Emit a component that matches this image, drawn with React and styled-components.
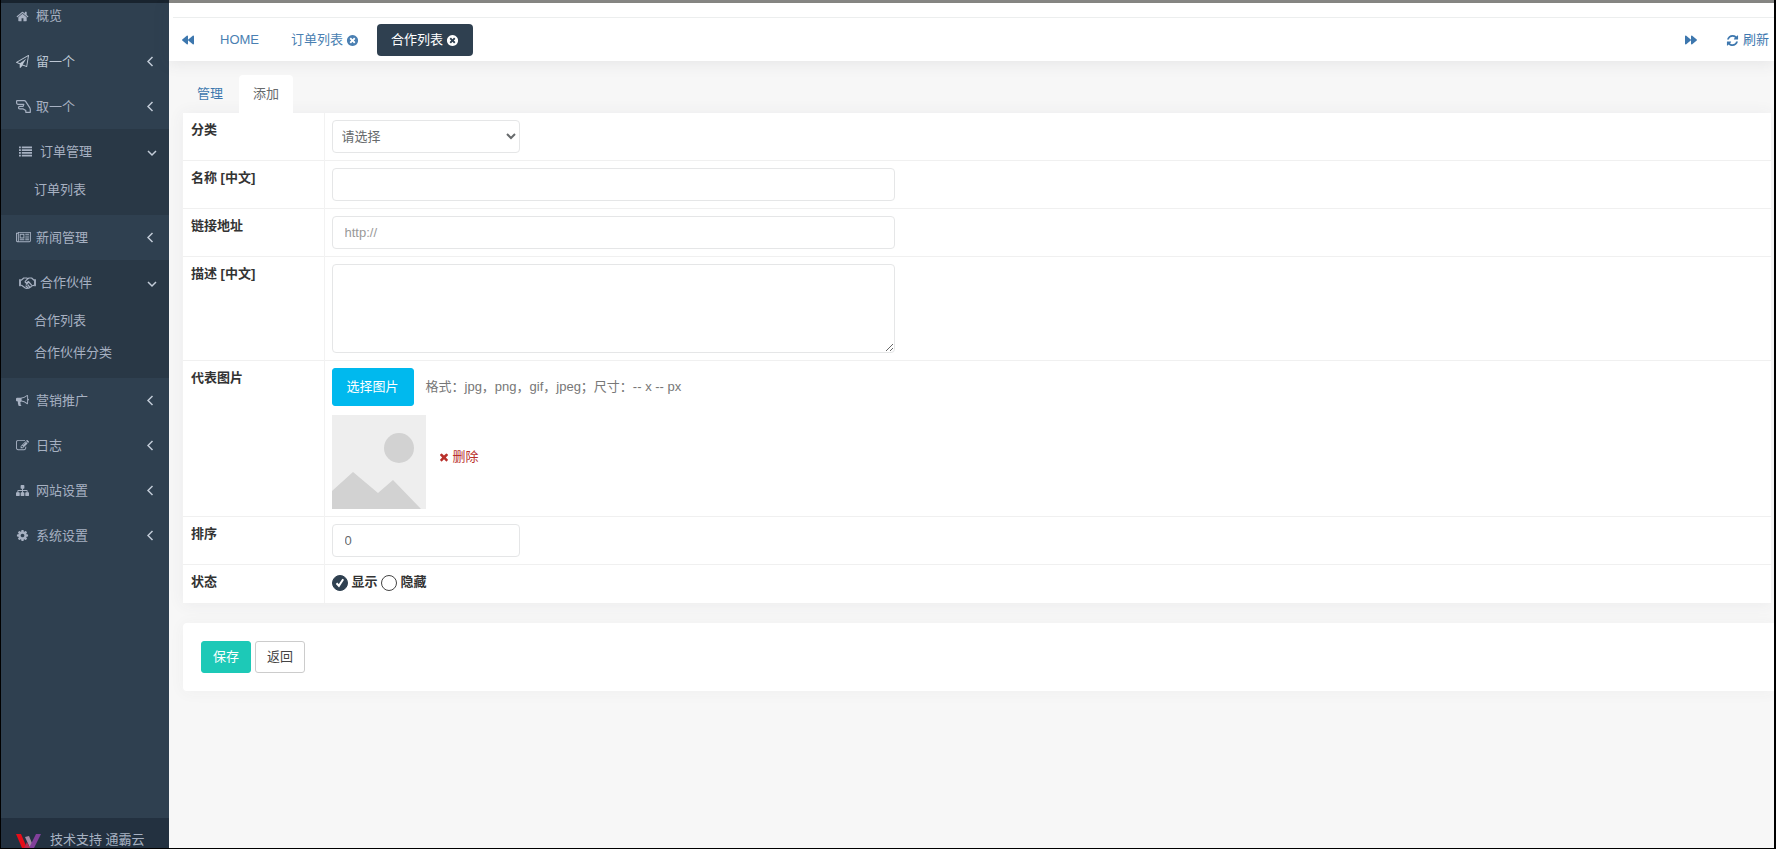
import React, { useState } from "react";
import styled, { createGlobalStyle, css } from "styled-components";
import { FaBackward, FaForward } from "react-icons/fa";

const fonts = `"Liberation Sans", "Noto Sans CJK SC", sans-serif`;

const Global = createGlobalStyle`
  *, *::before, *::after { box-sizing: border-box; }
  body { margin: 0; background: #f7f7f7; color: #676a6c; font: 13px/20px ${fonts}; }
  button, input, select, textarea { font: inherit; color: inherit; }
  a { color: #3d77ae; text-decoration: none; }
`;

const paths = {
  home: "M1472 992v480q0 26-19 45t-45 19h-384v-384h-256v384h-384q-26 0-45-19t-19-45v-480q0-1 .5-3t.5-3l575-474 575 474q1 2 1 6zm223-69l-62 74q-8 9-21 11h-3q-13 0-21-7l-692-577-692 577q-12 8-24 7-13-2-21-11l-62-74q-8-10-7-23.5t11-21.5l719-599q32-26 76-26t76 26l244 204v-195q0-14 9-23t23-9h192q14 0 23 9t9 23v408l219 182q10 8 11 21.5t-7 23.5z",
  plane: "M1764 11q33 24 27 64l-256 1536q-5 29-32 45-14 8-31 8-11 0-24-5l-527-215-298 327q-18 21-47 21-14 0-23-4-19-7-30-23.5t-11-36.5v-452l-472-193q-37-14-40-55-3-39 32-59l1664-960q35-21 68 2zm-342 1499l221-1323-1434 827 336 137 863-639-478 797z",
  list: "M0 192h256v256h-256zM384 192h1408v256h-1408zM0 576h256v256h-256zM384 576h1408v256h-1408zM0 960h256v256h-256zM384 960h1408v256h-1408zM0 1344h256v256h-256zM384 1344h1408v256h-1408z",
  news: "M1024 512h-384v384h384v-384zm128 640v128h-640v-128h640zm0-768v640h-640v-640h640zm640 768v128h-512v-128h512zm0-256v128h-512v-128h512zm0-256v128h-512v-128h512zm0-256v128h-512v-128h512zm-1536 960v-960h-128v960q0 26 19 45t45 19 45-19 19-45zm1664 0v-1088h-1536v1088q0 33-11 64h1483q26 0 45-19t19-45zm128-1216v1216q0 80-56 136t-136 56h-1664q-80 0-136-56t-56-136v-1088h256v-128h1792z",
  horn: "M1664 640q53 0 90.5 37.5t37.5 90.5-37.5 90.5-90.5 37.5v384q0 52-38 90t-90 38q-417-347-812-380-58 19-91 66t-31 100.5 40 92.5q-20 33-23 65.5t6 58 33.5 55 48 50 61.5 50.5q-29 58-111.5 83t-168.5 11.5-132-55.5q-7-23-29.5-87.5t-32-94.5-23-89-15-101 3.5-98.5 22-110.5h-122q-66 0-113-47t-47-113v-192q0-66 47-113t113-47h480q435 0 896-384 52 0 90 38t38 90v384zm-128 604v-954q-394 302-768 343v270q377 42 768 341z",
  edit: "M888 1184l116-116-152-152-116 116v56h96v96h56zm440-720q-16-16-33 1l-350 350q-17 17-1 33t33-1l350-350q17-17 1-33zm80 594v190q0 119-84.5 203.5t-203.5 84.5h-832q-119 0-203.5-84.5t-84.5-203.5v-832q0-119 84.5-203.5t203.5-84.5h832q63 0 117 25 15 7 18 23 3 17-9 29l-49 49q-14 14-32 8-23-6-45-6h-832q-66 0-113 47t-47 113v832q0 66 47 113t113 47h832q66 0 113-47t47-113v-126q0-13 9-22l64-64q15-15 35-7t20 29zm-96-738l288 288-672 672h-288v-288zm444 132l-92 92-288-288 92-92q28-28 68-28t68 28l152 152q28 28 28 68t-28 68z",
  sitemap: "M1792 1248v320q0 40-28 68t-68 28h-320q-40 0-68-28t-28-68v-320q0-40 28-68t68-28h96v-192h-512v192h96q40 0 68 28t28 68v320q0 40-28 68t-68 28h-320q-40 0-68-28t-28-68v-320q0-40 28-68t68-28h96v-192h-512v192h96q40 0 68 28t28 68v320q0 40-28 68t-68 28h-320q-40 0-68-28t-28-68v-320q0-40 28-68t68-28h96v-192q0-52 38-90t90-38h512v-192h-96q-40 0-68-28t-28-68v-320q0-40 28-68t68-28h320q40 0 68 28t28 68v320q0 40-28 68t-68 28h-96v192h512q52 0 90 38t38 90v192h96q40 0 68 28t28 68z",
  cog: "M1152 896q0-106-75-181t-181-75-181 75-75 181 75 181 181 75 181-75 75-181zm512-109v222q0 12-8 23t-20 13l-185 28q-19 54-39 91 35 50 107 138 10 12 10 25t-9 23q-27 37-99 108t-94 71q-12 0-26-9l-138-108q-44 23-91 38-16 136-29 186-7 28-36 28h-222q-14 0-24.5-8.5t-11.5-21.5l-28-184q-49-16-90-37l-141 107q-10 9-25 9-14 0-25-11-126-114-165-168-7-10-7-23 0-12 8-23 15-21 51-66.5t54-70.5q-27-50-41-99l-183-27q-13-2-21-12.5t-8-23.5v-222q0-12 8-23t19-13l186-28q14-46 39-92-40-57-107-138-10-12-10-24 0-10 9-23 26-36 98.5-107.5t94.5-71.5q13 0 26 10l138 107q44-23 91-38 16-136 29-186 7-28 36-28h222q14 0 24.5 8.5t11.5 21.5l28 184q49 16 90 37l142-107q9-9 24-9 13 0 25 10 129 119 165 170 7 8 7 22 0 12-8 23-15 21-51 66.5t-54 70.5q26 50 41 98l183 28q13 2 21 12.5t8 23.5z",
  closeCircle: "M1277 1122q0-26-19-45l-181-181 181-181q19-19 19-45 0-27-19-46l-90-90q-19-19-46-19-26 0-45 19l-181 181-181-181q-19-19-45-19-27 0-46 19l-90 90q-19 19-19 46 0 26 19 45l181 181-181 181q-19 19-19 45 0 27 19 46l90 90q19 19 46 19 26 0 45-19l181-181 181 181q19 19 45 19 27 0 46-19l90-90q19-19 19-46zm387-226q0 209-103 385.5t-279.5 279.5-385.5 103-385.5-103-279.5-279.5-103-385.5 103-385.5 279.5-279.5 385.5-103 385.5 103 279.5 279.5 103 385.5z",
  refresh: "M1639 1056q0 5-1 7-64 268-268 434.5t-478 166.5q-146 0-282.5-55t-243.5-157l-129 129q-19 19-45 19t-45-19-19-45v-448q0-26 19-45t45-19h448q26 0 45 19t19 45-19 45l-137 137q71 66 161 102t187 36q134 0 250-65t186-179q11-17 53-117 8-23 30-23h192q13 0 22.5 9.5t9.5 22.5zm25-800v448q0 26-19 45t-45 19h-448q-26 0-45-19t-19-45 19-45l138-138q-148-137-349-137-134 0-250 65t-186 179q-11 17-53 117-8 23-30 23h-199q-13 0-22.5-9.5t-9.5-22.5v-7q65-268 270-434.5t480-166.5q146 0 284 55.5t245 156.5l130-129q19-19 45-19t45 19 19 45z",
  times: "M1490 1322q0 40-28 68l-136 136q-28 28-68 28t-68-28l-294-294-294 294q-28 28-68 28t-68-28l-136-136q-28-28-28-68t28-68l294-294-294-294q-28-28-28-68t28-68l136-136q28-28 68-28t68 28l294 294 294-294q28-28 68-28t68 28l136 136q28 28 28 68t-28 68l-294 294 294 294q28 28 28 68z",
};

const Glyph = ({ name, size = 13, box = "0 0 1792 1792" }) => (
  <svg height={size} viewBox={box} fill="currentColor" aria-hidden="true"><path d={paths[name]} /></svg>
);

const HandIcon = () => (
  <svg width="15" height="13" viewBox="0 0 15 13" fill="none" stroke="currentColor" strokeWidth="1.2" strokeLinejoin="round" aria-hidden="true">
    <path d="M1.1.7h7.1q1 0 1.6.9l3.9 6q.6 1 .6 2v2.7H9.8v-1.7L7.2 8.9H3.7q-1.2 0-1.2-1.1 0-1.4 1.4-1.4h3.2l.7-2H2.2Q.6 4.400.6 2.600V1.200q0-.5.5-.5z" />
  </svg>
);

const HandshakeIcon = () => (
  <svg width="17" height="12" viewBox="0 0 17 12" fill="none" stroke="currentColor" strokeWidth="1.2" strokeLinejoin="round" strokeLinecap="round" aria-hidden="true">
    <path d="M1 3v5.400M16 3v5.400" strokeWidth="1.800" />
    <path d="M2.500 3l2.300-2h3l1 .7 1.200-.7h2.600L14.800 3M2.500 8.300l3.800 2.700q1 .6 2 .2 1.600.2 2.400-.9 1.300.1 1.700-1.300l2.400-.7" />
    <path d="M8.800 1.700L6.200 4.300q-.2 1.700 1.400 1.500L9.400 4.500l3 3.300M9.800 5l-2.500 2.200M7 9l1.600 1.500M9 8l1.500 1.800" />
  </svg>
);

const Shell = styled.div`
  display: flex;
  min-height: 100vh;
  border: solid #000;
  border-width: 0 2px 1px 1px;
`;

const Sidebar = styled.aside`
  flex: 0 0 168px;
  display: flex;
  flex-direction: column;
  background: #2f4050;
  color: #a7b1c2;
  border-top: 3px solid #18232e;
`;

const Menu = styled.nav`flex: 1;`;

const Group = styled.div`
  background: ${(p) => (p.$open ? "#293846" : "transparent")};
  padding-bottom: ${(p) => (p.$open ? "9px" : 0)};
`;

const MenuItem = styled.a`
  display: flex;
  align-items: center;
  height: ${(p) => (p.$clipped ? "36px" : "45px")};
  padding: 0 15px;
  padding-bottom: ${(p) => (p.$clipped ? "10px" : 0)};
  gap: 7px;
  color: ${(p) => (p.$bright ? "#bcc6d3" : "#a7b1c2")};
  ${(p) => p.$open && css`padding: 0 12px 0 18px; gap: 8px;`}
`;

const IconSlot = styled.span`
  display: flex;
  width: ${(p) => (p.$wide ? "15px" : "13px")};
  margin-right: ${(p) => (p.$wide ? "-2px" : 0)};
  svg { flex: none; }
`;

const Chevron = styled.svg`
  margin-left: auto;
  fill: none;
  stroke: #c3ccd8;
  stroke-width: 1.5;
`;

const SubItem = styled.a`
  display: block;
  padding-left: 33px;
  line-height: 32px;
  color: #a7b1c2;
`;

const Support = styled.footer`
  display: flex;
  gap: 9px;
  height: 30px;
  padding: 12px 0 0 15px;
  background: #233140;
  overflow: hidden;
  white-space: nowrap;
  svg { flex: none; margin-top: 4px; }
`;

const Main = styled.main`
  flex: 1;
  min-width: 0;
  border-top: 3px solid #888885;
`;

const TopStrip = styled.div`
  height: 15px;
  margin-left: 4px;
  border-bottom: 1px solid #eceeee;
`;

const Header = styled.header`
  background: #fff;
  box-shadow: 0 1px 15px 1px rgba(69, 65, 78, 0.1);
`;

const TabBar = styled.nav`
  display: flex;
  align-items: center;
  padding: 6px 5px 5px 13px;
  gap: 4px;
`;

const IconButton = styled.button`
  display: flex;
  align-items: center;
  padding: 0;
  gap: 4px;
  border: 0;
  background: none;
  color: #3d77ae;
  cursor: pointer;
`;

const RemoveButton = styled(IconButton)`
  gap: 3px;
  padding-bottom: 10px;
  color: #b9302b;
`;

const PageTab = styled.a`
  display: flex;
  align-items: center;
  gap: 3px;
  height: 32px;
  padding: 0 14px;
  border-radius: 4px;
  color: ${(p) => (p.$active ? "#fff" : "#4a7fb2")};
  background: ${(p) => (p.$active ? "#2f4050" : "transparent")};
`;

const TabList = styled.div`
  display: flex;
  flex: 1;
  gap: 4px;
  padding-left: 8px;
`;

const BarTools = styled.div`
  display: flex;
  gap: 29px;
`;

const Content = styled.div`
  padding: 14px 0 0 14px;
`;

const SubTabs = styled.div`
  display: flex;
  gap: 2px;
`;

const SubTab = styled.a`
  height: 38px;
  padding: 0 14px;
  line-height: 38px;
  border-radius: 4px 4px 0 0;
  background: ${(p) => (p.$active ? "#fff" : "transparent")};
  color: ${(p) => (p.$active ? "#676a6c" : "#3d77ae")};
`;

const FormTable = styled.table`
  width: calc(100% - 3px);
  border-collapse: collapse;
  table-layout: fixed;
  background: #fff;
  box-shadow: 0 1px 15px 1px rgba(69, 65, 78, 0.06);
  tr + tr > * { border-top: 1px solid #f0f0f0; }
  col:first-child { width: 141px; }
`;

const HeadCell = styled.th`
  padding: 7px 8px;
  border-right: 1px solid #f2f2f2;
  text-align: left;
  vertical-align: top;
  font-weight: 600;
  color: #333;
`;

const Cell = styled.td`
  padding: 7px;
  vertical-align: top;
`;

const control = css`
  display: block;
  height: 33px;
  width: ${(p) => (p.$short ? "188px" : "563px")};
  max-width: 100%;
  border: 1px solid #e5e6e7;
  border-radius: 4px;
  background: #fff;
  color: #676a6c;
`;

const TextInput = styled.input`
  ${control}
  padding: 6px 12px;
  &::placeholder { color: #999; }
`;

const Select = styled.select`
  ${control}
  padding: 0 5px;
`;

const TextArea = styled.textarea`
  ${control}
  height: 89px;
  padding: 6px 12px;
  resize: vertical;
`;

const Line = styled.div`
  display: flex;
  align-items: center;
  gap: 12px;
  & + & { margin-top: 9px; }
`;

const Hint = styled.span`color: #777;`;

const Button = styled.button`
  height: ${(p) => (p.$large ? "38px" : "32px")};
  padding: ${(p) => (p.$large ? "0 14px" : "0 11px")};
  border: 1px solid ${(p) => p.$border};
  border-radius: 3px;
  background: ${(p) => p.$fill};
  color: ${(p) => p.$ink || "#fff"};
  cursor: pointer;
`;

const Radios = styled.div`
  display: flex;
  gap: 3px;
  height: 24px;
  label { display: flex; gap: 4px; color: #333; font-weight: 600; }
`;

const Radio = styled.input`
  appearance: none;
  width: 16px;
  height: 16px;
  margin: 3px 0 0;
  border: 1px solid #444;
  border-radius: 50%;
  background: #fff;
  &:checked {
    border-color: #2f4050;
    background: #2f4050 url("data:image/svg+xml,%3Csvg xmlns='http://www.w3.org/2000/svg' viewBox='0 0 14 14'%3E%3Cpath d='M3.5 7.2l2.4 2.6 4.3-6.6' fill='none' stroke='white' stroke-width='2'/%3E%3C/svg%3E") center / 14px no-repeat;
  }
`;

const Actions = styled.section`
  display: flex;
  gap: 4px;
  margin-top: 20px;
  padding: 18px;
  border-radius: 4px 0 0 4px;
  background: #fff;
  box-shadow: 0 1px 15px 1px rgba(69, 65, 78, 0.04);
`;

const menu = [
  { label: "概览", icon: <Glyph name="home" />, leaf: true, clipped: true },
  { label: "留一个", icon: <Glyph name="plane" />, bright: true },
  { label: "取一个", icon: <HandIcon />, wide: true },
  { label: "订单管理", icon: <Glyph name="list" />, open: true, items: ["订单列表"] },
  { label: "新闻管理", icon: <Glyph name="news" box="0 0 2048 1792" />, wide: true },
  { label: "合作伙伴", icon: <HandshakeIcon />, wide: true, open: true, items: ["合作列表", "合作伙伴分类"] },
  { label: "营销推广", icon: <Glyph name="horn" /> },
  { label: "日志", icon: <Glyph name="edit" /> },
  { label: "网站设置", icon: <Glyph name="sitemap" /> },
  { label: "系统设置", icon: <Glyph name="cog" /> },
];

function MenuGroup({ entry }) {
  return (
    <Group $open={entry.open}>
      <MenuItem href="#" $open={entry.open} $clipped={entry.clipped} $bright={entry.bright}>
        <IconSlot $wide={entry.wide}>{entry.icon}</IconSlot>
        {entry.label}
        {!entry.leaf && (
          <Chevron width={entry.open ? 10 : 7} height="11" viewBox={entry.open ? "0 0 10 11" : "0 0 7 11"}>
            <path d={entry.open ? "M1 5l4 4 4-4" : "M5.5 1L1 5.5 5.5 10"} />
          </Chevron>
        )}
      </MenuItem>
      {entry.items?.map((item) => <SubItem href="#" key={item}>{item}</SubItem>)}
    </Group>
  );
}

function FormRow({ label, field, children }) {
  return (
    <tr>
      <HeadCell scope="row">{field ? <label htmlFor={field}>{label}</label> : label}</HeadCell>
      <Cell>{children}</Cell>
    </tr>
  );
}

export default function App() {
  const [status, setStatus] = useState("show");
  return (
    <Shell>
      <Global />
      <Sidebar>
        <Menu>{menu.map((entry) => <MenuGroup key={entry.label} entry={entry} />)}</Menu>
        <Support>
          <svg width="25" height="20" viewBox="0 0 25 20" aria-hidden="true">
            <path d="M0 0h5l6 14h-5z" fill="#e60d18" />
            <path d="M9 3l4-1 5 12h-4z" fill="#a48ba5" />
            <path d="M20 0h5l-7 14h-5z" fill="#81409a" />
            <path d="M11 8l3 6h-6z" fill="#b5294f" />
          </svg>
          <span>技术支持 通霸云</span>
        </Support>
      </Sidebar>
      <Main>
        <Header>
          <TopStrip />
          <TabBar>
            <IconButton aria-label="向左"><FaBackward size={12} /></IconButton>
            <TabList>
              <PageTab href="#">HOME</PageTab>
              <PageTab href="#">订单列表 <Glyph name="closeCircle" /></PageTab>
              <PageTab href="#" $active>合作列表 <Glyph name="closeCircle" /></PageTab>
            </TabList>
            <BarTools>
              <IconButton aria-label="向右"><FaForward size={12} /></IconButton>
              <IconButton><Glyph name="refresh" />刷新</IconButton>
            </BarTools>
          </TabBar>
        </Header>
        <Content>
          <SubTabs>
            <SubTab href="#">管理</SubTab>
            <SubTab href="#" $active>添加</SubTab>
          </SubTabs>
          <FormTable>
            <colgroup><col /><col /></colgroup>
            <tbody>
              <FormRow label="分类" field="category">
                <Select id="category" $short><option>请选择</option></Select>
              </FormRow>
              <FormRow label="名称 [中文]" field="name"><TextInput id="name" /></FormRow>
              <FormRow label="链接地址" field="link"><TextInput id="link" placeholder="http://" /></FormRow>
              <FormRow label="描述 [中文]" field="description"><TextArea id="description" /></FormRow>
              <FormRow label="代表图片">
                <Line>
                  <Button $large $fill="#00b9ee" $border="#00b9ee">选择图片</Button>
                  <Hint>格式：jpg，png，gif，jpeg；尺寸：-- x -- px</Hint>
                </Line>
                <Line>
                  <svg width="94" height="94" viewBox="0 0 94 94" role="img">
                    <path d="M0 0h94v94H0z" fill="#eee" />
                    <circle cx="67" cy="33" r="15" fill="#d2d2d2" />
                    <path d="M0 76l21-19 25 21 15-13 28 29H0z" fill="#d2d2d2" />
                  </svg>
                  <RemoveButton><Glyph name="times" size={12} />删除</RemoveButton>
                </Line>
              </FormRow>
              <FormRow label="排序" field="order"><TextInput id="order" $short defaultValue="0" /></FormRow>
              <FormRow label="状态">
                <Radios>
                  <label><Radio type="radio" name="status" checked={status === "show"} onChange={() => setStatus("show")} />显示</label>
                  <label><Radio type="radio" name="status" checked={status === "hide"} onChange={() => setStatus("hide")} />隐藏</label>
                </Radios>
              </FormRow>
            </tbody>
          </FormTable>
          <Actions>
            <Button $fill="#1dc9b7" $border="#1dc9b7">保存</Button>
            <Button $fill="#fff" $border="#ccc" $ink="#444">返回</Button>
          </Actions>
        </Content>
      </Main>
    </Shell>
  );
}
